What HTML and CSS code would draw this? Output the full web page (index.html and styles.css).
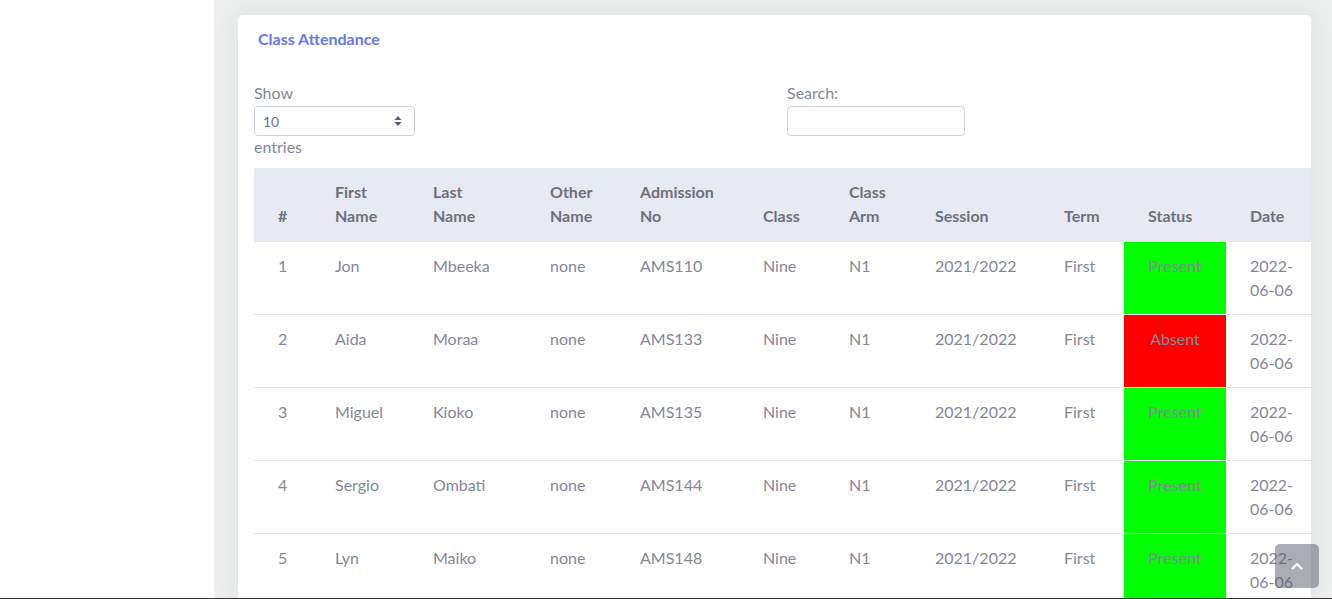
FILE: index.html
```html
<!DOCTYPE html>
<html lang="en">
<head>
<meta charset="utf-8">
<title>Class Attendance</title>
<link rel="stylesheet" href="styles.css">
</head>
<body>
<div class="wrapper">
  <aside class="sidebar"></aside>
  <main class="content">
    <section class="card">
      <header class="card-header">
        <h6 class="card-title">Class Attendance</h6>
      </header>
      <div class="card-body">
        <div class="dt-controls">
          <div class="dt-length">
            <label class="dt-label">Show</label>
            <div class="select">
              <span>10</span>
              <svg class="select-arrows" width="8" height="12" viewBox="0 0 8 12"><path d="M4 1 L7.5 5 H0.5 Z M4 11 L0.5 7 H7.5 Z" fill="#5a5c69"/></svg>
            </div>
            <span class="dt-label">entries</span>
          </div>
          <div class="dt-search">
            <label class="dt-label">Search:</label>
            <div class="input"></div>
          </div>
        </div>
        <table class="table">
          <thead>
            <tr>
              <th class="c-num">#</th>
              <th class="c-first">First Name</th>
              <th class="c-last">Last Name</th>
              <th class="c-other">Other Name</th>
              <th class="c-adm">Admission No</th>
              <th class="c-class">Class</th>
              <th class="c-arm">Class Arm</th>
              <th class="c-session">Session</th>
              <th class="c-term">Term</th>
              <th class="c-status">Status</th>
              <th class="c-date">Date</th>
            </tr>
          </thead>
          <tbody>
            <tr><td>1</td><td>Jon</td><td>Mbeeka</td><td>none</td><td>AMS110</td><td>Nine</td><td>N1</td><td>2021/2022</td><td>First</td><td class="status present">Present</td><td>2022-<br>06-06</td></tr>
            <tr><td>2</td><td>Aida</td><td>Moraa</td><td>none</td><td>AMS133</td><td>Nine</td><td>N1</td><td>2021/2022</td><td>First</td><td class="status absent">Absent</td><td>2022-<br>06-06</td></tr>
            <tr><td>3</td><td>Miguel</td><td>Kioko</td><td>none</td><td>AMS135</td><td>Nine</td><td>N1</td><td>2021/2022</td><td>First</td><td class="status present">Present</td><td>2022-<br>06-06</td></tr>
            <tr><td>4</td><td>Sergio</td><td>Ombati</td><td>none</td><td>AMS144</td><td>Nine</td><td>N1</td><td>2021/2022</td><td>First</td><td class="status present">Present</td><td>2022-<br>06-06</td></tr>
            <tr><td>5</td><td>Lyn</td><td>Maiko</td><td>none</td><td>AMS148</td><td>Nine</td><td>N1</td><td>2021/2022</td><td>First</td><td class="status present">Present</td><td>2022-<br>06-06</td></tr>
          </tbody>
        </table>
      </div>
    </section>
  </main>
</div>
<a class="scroll-top" href="#">
  <svg width="12" height="8" viewBox="0 0 12 8"><path d="M1.5 6.5 L6 2 L10.5 6.5" fill="none" stroke="#fff" stroke-width="2.4" stroke-linecap="round" stroke-linejoin="round"/></svg>
</a>
<div class="bottom-line"></div>
</body>
</html>
```
FILE: styles.css
```css
* { box-sizing: border-box; }
html, body { margin: 0; padding: 0; height: 100%; overflow: hidden; }
body {
  font-family: Lato, "Noto Sans", "Liberation Sans", sans-serif;
  font-size: 16px;
  line-height: 1.5;
  color: #858796;
  background: #fff;
}
.wrapper { display: flex; height: 100vh; }
.sidebar { width: 214px; flex: 0 0 214px; background: #fff; }
.content {
  flex: 1;
  background: #eef0ef;
  padding: 15px 21px 0 24px;
  overflow: hidden;
}
.card {
  background: #fff;
  border-radius: 5px;
  box-shadow: 0 0 24px 4px rgba(200, 204, 204, 0.35);
  overflow: hidden;
}
.card-header { padding: 12px 20px 16px 20px; }
.card-title {
  margin: 0;
  font-size: 16px;
  line-height: 1.5;
  font-weight: 700;
  color: #6777ef;
}
.card-body { padding: 14px 0 0 16px; }
.dt-controls {
  display: grid;
  grid-template-columns: 533px 1fr;
  margin-bottom: 9px;
}
.dt-length, .dt-search { display: flex; flex-direction: column; align-items: flex-start; }
.dt-label { line-height: 24px; }
.select, .input { margin-top: 1px; margin-bottom: -1px; }
.select {
  width: 161px;
  height: 30px;
  border: 1px solid #d1d3e2;
  border-radius: 4px;
  display: flex;
  align-items: center;
  justify-content: space-between;
  padding: 0 12px 0 8px;
  font-size: 14px;
  color: #6e707e;
}
.input {
  width: 178px;
  height: 30px;
  border: 1px solid #d1d3e2;
  border-radius: 4px;
}
.table {
  width: 1082px;
  border-collapse: collapse;
  table-layout: fixed;
  margin-top: 1px;
}
.table th, .table td {
  padding: 12px 24px;
  text-align: left;
  vertical-align: top;
  line-height: 24px;
}
.table thead th {
  background: #e8eaf3;
  color: #6e707e;
  font-weight: 700;
  vertical-align: bottom;
  padding-bottom: 13px;
  border-bottom: 1px solid #e3e6f0;
}
.table tbody td { border-top: 1px solid #e3e6f0; }
.c-num { width: 57px; }
.c-first { width: 98px; }
.c-last { width: 117px; }
.c-other { width: 90px; }
.c-adm { width: 123px; }
.c-class { width: 86px; }
.c-arm { width: 86px; }
.c-session { width: 129px; }
.c-term { width: 84px; }
.c-status { width: 102px; }
.c-date { width: 110px; }
.table td.status { text-align: center; padding-left: 4px; padding-right: 4px; color: #858796; }
.present { background: #00ff00; }
.absent { background: #ff0000; }
.scroll-top {
  position: fixed;
  right: 13px;
  bottom: 11px;
  width: 44px;
  height: 44px;
  border-radius: 5px;
  background: rgba(90, 92, 105, 0.5);
  display: flex;
  align-items: center;
  justify-content: center;
}
.bottom-line {
  position: fixed;
  left: 0;
  right: 0;
  bottom: 0;
  height: 1px;
  background: #333;
}
```
